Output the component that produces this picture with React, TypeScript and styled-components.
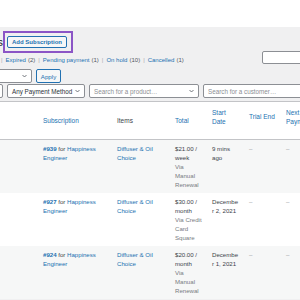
import styled, { createGlobalStyle } from "styled-components"

const GlobalStyle = createGlobalStyle`
  html, body {
    margin: 0;
    padding: 0;
    width: 300px;
    height: 300px;
    overflow: hidden;
  }
  body {
    background: #f0f0f1;
    font-family: "Liberation Sans", Arial, sans-serif;
    color: #3c434a;
  }
`

const TopBar = styled.div`
  height: 27px;
  background: #fff;
`

const Wrap = styled.div`
  width: 300px;
  padding-top: 4px;
`

const HeadRow = styled.div`
  display: flex;
  align-items: flex-start;
  height: 20px;
`

const TitleClip = styled.div`
  width: 3px;
  height: 22px;
  display: flex;
  align-items: center;
  justify-content: flex-end;
  white-space: nowrap;
`

const Title = styled.h1`
  margin: 0;
  font-size: 11.5px;
  font-weight: 400;
  line-height: 14px;
  color: #1d2327;
`

const Highlight = styled.div`
  height: 22px;
  box-sizing: border-box;
  border: 2px solid #8b55c6;
  display: flex;
  align-items: center;
  padding: 0 4px 0 2px;
`

const AddButton = styled.button`
  height: 12px;
  box-sizing: border-box;
  padding: 0 4px;
  border: 1px solid #2271b1;
  border-radius: 2px;
  background: #f6f7f7;
  color: #2271b1;
  font-family: inherit;
  font-size: 6px;
  font-weight: 700;
  line-height: 10px;
  white-space: nowrap;
`

const StatusRow = styled.div`
  display: flex;
  justify-content: space-between;
  align-items: flex-end;
  height: 14px;
`

const StatusList = styled.div`
  margin-left: -2px;
  font-size: 6px;
  line-height: 9px;
  white-space: nowrap;
  color: #50575e;
`

const Sep = styled.span`
  padding: 0 3px;
  color: #a7aaad;
`

const StatusLink = styled.span`
  color: #2271b1;
`

const Count = styled.span`
  margin-left: 2px;
  color: #50575e;
`

const SearchBox = styled.div`
  width: 50px;
  height: 13px;
  box-sizing: border-box;
  margin: 0 -12px 1px 0;
  background: #fff;
  border: 1px solid #8c8f94;
  border-radius: 2px;
`

const FilterRow = styled.div<{ $top: number }>`
  display: flex;
  gap: 4px;
  margin-top: ${p => p.$top}px;
  height: 14px;
`

const Select = styled.div<{ $w: number; $ml?: number; $muted?: boolean }>`
  flex: none;
  width: ${p => p.$w}px;
  margin-left: ${p => p.$ml ?? 0}px;
  height: 14px;
  box-sizing: border-box;
  padding: 0 4px;
  background: #fff;
  border: 1px solid #8c8f94;
  border-radius: 2px;
  display: flex;
  align-items: center;
  justify-content: space-between;
  font-size: 6.3px;
  color: ${p => (p.$muted ? "#8c8f94" : "#2c3338")};
  white-space: nowrap;
  overflow: hidden;
`

const ApplyButton = styled.button`
  flex: none;
  width: 25px;
  height: 14px;
  padding: 0;
  box-sizing: border-box;
  border: 1px solid #2271b1;
  border-radius: 2px;
  background: #f6f7f7;
  color: #2271b1;
  font-family: inherit;
  font-size: 6.2px;
`

const Chevron = () => (
  <svg width="5" height="4" viewBox="0 0 5 4">
    <polyline points="0.5,1 2.5,3 4.5,1" fill="none" stroke="#50575e" strokeWidth="0.8" />
  </svg>
)

const Table = styled.table`
  margin-top: 3px;
  width: 322px;
  table-layout: fixed;
  border-collapse: separate;
  border-spacing: 0;
  border-top: 1px solid #c3c4c7;
  background: #fff;
  font-size: 6.1px;
  line-height: 9px;

  th,
  td {
    padding: 0 5px 0 4px;
    text-align: left;
    vertical-align: top;
    overflow-wrap: anywhere;
  }
  td {
    padding-top: 4px;
    padding-bottom: 4px;
  }
  th {
    border-bottom: 1px solid #c3c4c7;
    font-weight: 400;
    font-size: 6.5px;
  }
  th:nth-child(4),
  td:nth-child(4) {
    padding-right: 3px;
  }
  th:nth-child(5),
  td:nth-child(5) {
    padding-right: 6px;
  }
`

const Col = styled.col<{ $w: number }>`
  width: ${p => p.$w}px;
`

const HeadLabel = styled.div<{ $top: number; $plain?: boolean }>`
  height: 37px;
  box-sizing: border-box;
  padding-top: ${p => p.$top}px;
  color: ${p => (p.$plain ? "#3c434a" : "#2271b1")};
`

const Row = styled.tr<{ $alt?: boolean }>`
  background: ${p => (p.$alt ? "#f6f7f7" : "#fff")};
`

const Link = styled.span<{ $strong?: boolean }>`
  color: #2271b1;
  font-weight: ${p => (p.$strong ? 700 : 400)};
`

const Muted = styled.div`
  color: #787c82;
`

const Dash = styled.span`
  color: #8c8f94;
`

const statuses = [
  { label: "Expired", count: 2 },
  { label: "Pending payment", count: 1 },
  { label: "On hold", count: 10 },
  { label: "Cancelled", count: 1 },
]

const rows = [
  { id: 939, total: "$21.00 / week", via: "Via Manual Renewal", start: "9 mins ago", alt: true },
  { id: 927, total: "$30.00 / month", via: "Via Credit Card Square", start: "December 2, 2021" },
  { id: 924, total: "$20.00 / month", via: "Via Manual Renewal", start: "December 1, 2021", alt: true },
]

export default function App() {
  return (
    <>
      <GlobalStyle />
      <TopBar />
      <Wrap>
        <HeadRow>
          <TitleClip>
            <Title>Subscriptions</Title>
          </TitleClip>
          <Highlight>
            <AddButton>Add Subscription</AddButton>
          </Highlight>
        </HeadRow>

        <StatusRow>
          <StatusList>
            {statuses.map(s => (
              <span key={s.label}>
                <Sep>|</Sep>
                <StatusLink>{s.label}</StatusLink>
                <Count>({s.count})</Count>
              </span>
            ))}
          </StatusList>
          <SearchBox />
        </StatusRow>

        <FilterRow $top={4}>
          <Select $w={40} $ml={-8}>
            <span />
            <Chevron />
          </Select>
          <ApplyButton>Apply</ApplyButton>
        </FilterRow>

        <FilterRow $top={1}>
          <Select $w={20} $ml={-17} />
          <Select $w={78}>
            Any Payment Method
            <Chevron />
          </Select>
          <Select $w={110} $muted>
            Search for a product…
            <Chevron />
          </Select>
          <Select $w={120} $muted>
            Search for a customer…
          </Select>
        </FilterRow>

        <Table>
          <colgroup>
            <Col $w={39} />
            <Col $w={74} />
            <Col $w={58} />
            <Col $w={37} />
            <Col $w={37} />
            <Col $w={37} />
            <Col $w={40} />
          </colgroup>
          <thead>
            <tr>
              <th>
                <HeadLabel $top={14} />
              </th>
              <th>
                <HeadLabel $top={14}>Subscription</HeadLabel>
              </th>
              <th>
                <HeadLabel $top={14} $plain>
                  Items
                </HeadLabel>
              </th>
              <th>
                <HeadLabel $top={14}>Total</HeadLabel>
              </th>
              <th>
                <HeadLabel $top={6}>Start Date</HeadLabel>
              </th>
              <th>
                <HeadLabel $top={10}>Trial End</HeadLabel>
              </th>
              <th>
                <HeadLabel $top={6}>Next Payment</HeadLabel>
              </th>
            </tr>
          </thead>
          <tbody>
            {rows.map(r => (
              <Row key={r.id} $alt={r.alt}>
                <td />
                <td>
                  <Link $strong>#{r.id}</Link> for <Link>Happiness Engineer</Link>
                </td>
                <td>
                  <Link>Diffuser &amp; Oil Choice</Link>
                </td>
                <td>
                  {r.total}
                  <Muted>{r.via}</Muted>
                </td>
                <td>{r.start}</td>
                <td>
                  <Dash>–</Dash>
                </td>
                <td>
                  <Dash>–</Dash>
                </td>
              </Row>
            ))}
          </tbody>
        </Table>
      </Wrap>
    </>
  )
}
